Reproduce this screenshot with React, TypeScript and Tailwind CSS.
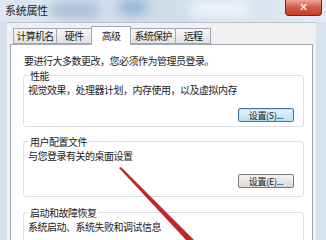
import React from 'react';

const font = { fontFamily: '"Noto Sans CJK SC", "Liberation Sans", sans-serif' };

const tabs = ['计算机名', '硬件', '高级', '系统保护', '远程'];
const tabWidths = ['w-[44px]', 'w-[36px]', 'w-[40px]', 'w-[46px]', 'w-[36px]'];

function SettingsButton({ label, focused }: { label: string; focused?: boolean }) {
  return (
    <div
      className={`w-[56px] h-[14px] rounded-[2px] border flex items-center justify-center text-[9px] leading-none tracking-[-0.3px] text-[#1b1b1b] ${
        focused
          ? 'border-[#3d7bab] bg-gradient-to-b from-[#e8f5fc] to-[#b9dff3] shadow-[inset_0_0_0_1px_#aee4f7]'
          : 'border-[#7a7a7a] bg-gradient-to-b from-[#f4f4f4] to-[#dadada]'
      }`}
    >
      {label}
    </div>
  );
}

function Group({
  title,
  desc,
  button,
  focused,
  h,
  gap,
}: {
  title: string;
  desc: string;
  button?: string;
  focused?: boolean;
  h: string;
  gap?: string;
}) {
  return (
    <fieldset className={`ml-[12px] mr-[8px] border border-[#d9e1e6] rounded-[3px] ${h} px-[4px] flex flex-col`}>
      <legend className="ml-[1px] px-[1px] text-[10px] leading-[11px] tracking-[-0.5px] text-[#222]">{title}</legend>
      <div className="mt-[3px] text-[10px] leading-[11px] tracking-[-0.5px] text-[#222]">{desc}</div>
      {button && (
        <div className={`flex justify-end pr-[5px] ${gap}`}>
          <SettingsButton label={button} focused={focused} />
        </div>
      )}
    </fieldset>
  );
}

export default function App() {
  return (
    <div className="relative w-[326px] h-[240px] overflow-hidden bg-[#d6e3ef]" style={font}>
      {/* title bar */}
      <div className="relative h-[22px] overflow-hidden bg-gradient-to-r from-[#dfe8f1] via-[#cfdcea] to-[#e4ecf3]">
        <div className="absolute left-[50px] top-[2px] w-[50px] h-[16px] rounded-full bg-[#a9bfd6] blur-[6px]" />
        <div className="absolute left-[118px] top-[0px] w-[30px] h-[14px] rounded-full bg-[#8fb0d2] blur-[6px]" />
        <div className="absolute left-[190px] top-[2px] w-[60px] h-[14px] rounded-full bg-[#f2f6fa] blur-[6px]" />
        <div className="relative flex items-start justify-between pl-[5px] pr-[4px]">
          <div className="pt-[4px] text-[11px] leading-[13px] tracking-[-0.3px] text-[#1c1c1c]">系统属性</div>
          <div className="w-[37px] h-[16px] rounded-b-[4px] border border-t-0 border-[#6e2a22] bg-gradient-to-b from-[#e9a597] via-[#d25a45] to-[#c2402b] flex items-center justify-center">
            <span className="text-white text-[11px] font-bold leading-none" style={{ fontFamily: '"DejaVu Sans", sans-serif' }}>
              ✕
            </span>
          </div>
        </div>
      </div>

      {/* dialog body */}
      <div className="ml-[7px] mr-[10px] h-[218px] bg-[#f0f0f0] border-t border-[#b9c6d3] px-[3px]">
        {/* tabs */}
        <div className="flex items-end h-[21px] pl-[4px]">
          {tabs.map((t, i) => {
            const active = i === 2;
            return (
              <div
                key={t}
                className={`${tabWidths[i]} flex items-center justify-center text-[10px] leading-none tracking-[-0.8px] text-[#222] border border-[#a0a8b2] ${
                  active
                    ? 'h-[19px] bg-white border-b-0 relative top-[1px] z-10 -ml-px rounded-t-[1px]'
                    : 'h-[16px] -ml-px bg-gradient-to-b from-[#f7f7f7] to-[#e2e2e2]'
                }`}
              >
                {t}
              </div>
            );
          })}
        </div>

        {/* tab content */}
        <div className="h-[200px] bg-white border border-[#a0a8b2] pt-[10px] flex flex-col">
          <div className="pl-[13px] text-[10px] leading-[12px] tracking-[-0.5px] text-[#222]">
            要进行大多数更改，您必须作为管理员登录。
          </div>
          <div className="mt-[3px] flex flex-col">
            <Group title="性能" desc="视觉效果，处理器计划，内存使用，以及虚拟内存" button="设置(S)..." focused h="h-[57px]" gap="mt-[13px]" />
            <div className="h-[9px]" />
            <Group title="用户配置文件" desc="与您登录有关的桌面设置" button="设置(E)..." h="h-[61px]" gap="mt-[13px]" />
            <div className="h-[10px]" />
            <Group title="启动和故障恢复" desc="系统启动、系统失败和调试信息" h="h-[40px]" />
          </div>
        </div>
      </div>

      {/* red arrow overlay */}
      <svg className="absolute left-0 top-0 pointer-events-none" width="326" height="240" viewBox="0 0 326 240">
        <polygon points="119,168 121,167 194,240 186,240" fill="#c3262a" />
      </svg>
    </div>
  );
}
